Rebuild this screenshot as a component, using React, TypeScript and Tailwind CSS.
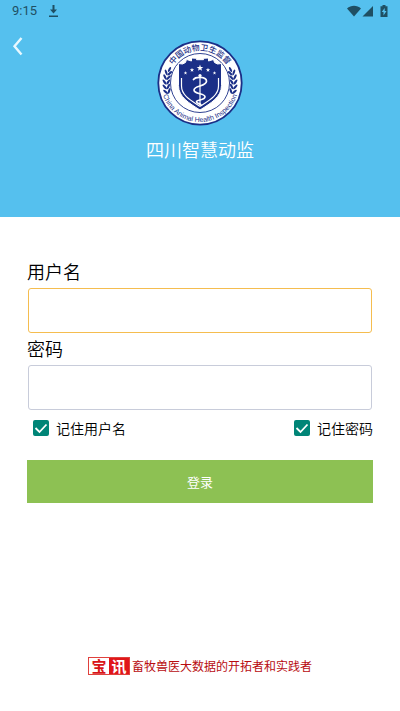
import { useState } from "react";

const navy = "#1b2f87";

function StatusBar() {
  return (
    <div className="flex h-[22px] items-center justify-between px-3 text-[#1f4f63]">
      <div className="flex items-center gap-3">
        <span className="font-[Roboto,sans-serif] text-[13px] leading-4">9:15</span>
        <svg className="h-3 w-[9px]" viewBox="0 0 9 12" fill="currentColor" aria-hidden="true">
          <path d="M3.500 0h2v4.500H8L4.500 8.500 1 4.500h2.500zM0 10.500h9V12H0z" />
        </svg>
      </div>
      <svg className="h-3 w-[41px]" viewBox="0 0 41 12" fill="currentColor" aria-hidden="true">
        <path d="M0 3.500C4-.3 10-.3 14 3.500L7 11.500z" />
        <path d="M26 1v10.500H15.500z" />
        <path fillRule="evenodd" d="M35.500 0h3v1.200H40.500V12h-7V1.200h2zM37.700 3l-3 4h1.800v3.500l3-4.500h-1.800z" />
      </svg>
    </div>
  );
}

function Leaves() {
  return (
    <g fill={navy}>
      {[-16, -8, 0, 8, 16].map((angle) => (
        <g key={angle} transform={`rotate(${angle} 43 43)`}>
          <ellipse cx="7.500" cy="42" rx="1.100" ry="3" transform="rotate(-35 7.500 42)" />
          <ellipse cx="11.200" cy="42" rx="1.100" ry="3" transform="rotate(35 11.200 42)" />
        </g>
      ))}
      <ellipse cx="12.500" cy="29.500" rx="1.100" ry="2.800" transform="rotate(28 12.500 29.500)" />
    </g>
  );
}

function Star({ x, y, size }: { x: number; y: number; size: number }) {
  return (
    <path
      fill="#fff"
      transform={`translate(${x} ${y}) scale(${size})`}
      d="M0-1 .24-.31.95-.31.38.12.59.81 0 .4-.59.81-.38.12-.95-.31-.24-.31z"
    />
  );
}

function Emblem() {
  return (
    <svg className="h-[86px] w-[86px]" viewBox="0 0 86 86" role="img" aria-label="中国动物卫生监督">
      <defs>
        <path id="arc-top" d="M10.500 43a32.500 32.500 0 0 1 65 0" />
        <path id="arc-bottom" d="M4 43a39 39 0 0 0 78 0" />
      </defs>
      <circle cx="43" cy="43" r="41.700" fill="#fff" stroke={navy} strokeWidth="1.800" />
      <circle cx="43" cy="43" r="29.500" fill="none" stroke={navy} strokeWidth=".9" />
      <Leaves />
      <g transform="translate(86 0) scale(-1 1)">
        <Leaves />
      </g>
      <path
        d="M21.500 23.500l4 .5 3-1.500 1-3 5 1.500v-3l5 .3v1.400h7v-1.400l5-.3v3l5-1.500 1 3 3 1.500 4-.5v22C64.500 57 54 63 43 70 32 63 21.500 57 21.500 45.500z"
        fill={navy}
        stroke="#fff"
        strokeWidth="1"
      />
      <path
        d="M24.500 38v8C24.500 55.500 34 60.500 43 66.300 52 60.500 61.500 55.500 61.500 46v-8"
        fill="none"
        stroke="#fff"
        strokeWidth="1.200"
      />
      <Star x={43} y={28} size={3.5} />
      <Star x={35} y={30} size={2.3} />
      <Star x={51} y={30} size={2.3} />
      <Star x={28.5} y={33} size={1.9} />
      <Star x={57.5} y={33} size={1.9} />
      <path d="M43 36v29" stroke="#fff" strokeWidth="1.200" strokeLinecap="round" />
      <circle cx="43" cy="35.500" r="1.600" fill="#fff" />
      <path
        d="M36.500 39.500c2-3 13-3 13 1.700 0 5.300-12.500 4.300-12.500 8.800s11 3 11 6.800-8.500 2.700-8.500 5 4 1.200 4.500 3.200"
        fill="none"
        stroke="#fff"
        strokeWidth="1.700"
        strokeLinecap="round"
      />
      <text
        fill={navy}
        textAnchor="middle"
        className="font-['Noto_Sans_CJK_SC',sans-serif] text-[8px] font-medium"
      >
        <textPath href="#arc-top" startOffset="50%">中国动物卫生监督</textPath>
      </text>
      <text
        fill={navy}
        textAnchor="middle"
        className="font-['Liberation_Sans',Arial,sans-serif] text-[7px]"
      >
        <textPath href="#arc-bottom" startOffset="50%">China Animal Health Inspection</textPath>
      </text>
    </svg>
  );
}

function Field({ id, label, type, active }: { id: string; label: string; type: string; active?: boolean }) {
  return (
    <div>
      <label htmlFor={id} className="mb-px block text-[18px] leading-[31px] font-[350]">
        {label}
      </label>
      <div className="px-px">
        <input
          id={id}
          type={type}
          className={`block h-[45px] w-full rounded-[3px] border bg-white px-3 text-base outline-none ${
            active ? "border-[#f5bd4f]" : "border-[#c8ccda]"
          }`}
        />
      </div>
    </div>
  );
}

function Remember({ label }: { label: string }) {
  const [checked, setChecked] = useState(true);
  return (
    <label className="flex items-center gap-[7px] text-sm leading-5 font-[350]">
      <span className="grid h-4 w-4">
        <input
          type="checkbox"
          checked={checked}
          onChange={(e) => setChecked(e.target.checked)}
          className="col-start-1 row-start-1 h-4 w-4 appearance-none rounded-[2px] border-2 border-[#008577] checked:bg-[#008577]"
        />
        <svg
          className="pointer-events-none col-start-1 row-start-1 h-4 w-4"
          viewBox="0 0 16 16"
          fill="none"
          stroke="#fff"
          strokeWidth="1.800"
          aria-hidden="true"
        >
          {checked && <path d="M2.500 8l4 4 7-7.500" />}
        </svg>
      </span>
      {label}
    </label>
  );
}

export default function App() {
  return (
    <div className="flex min-h-screen flex-col bg-white font-['Noto_Sans_CJK_SC',sans-serif] text-black">
      <header className="bg-[#55c0ee] pb-[55px]">
        <StatusBar />
        <div className="grid grid-cols-[1fr_auto_1fr] items-start pt-[18px]">
          <button type="button" aria-label="返回" className="ml-3 w-3 text-[#e8f8ff]">
            <svg className="h-[19px] w-3 overflow-visible" viewBox="0 0 12 19" aria-hidden="true">
              <path d="M9.500-2L2.500 6.300l7 8.300" fill="none" stroke="currentColor" strokeWidth="2.400" />
            </svg>
          </button>
          <Emblem />
        </div>
        <h1 className="mt-[10px] text-center text-[18px] leading-[26px] font-[350] text-white">四川智慧动监</h1>
      </header>

      <main className="flex grow flex-col px-[27px] pt-[39px]">
        <form onSubmit={(e) => e.preventDefault()}>
          <Field id="username" label="用户名" type="text" active />
          <Field id="password" label="密码" type="password" />
          <div className="flex justify-between pt-2 pl-[6px]">
            <Remember label="记住用户名" />
            <Remember label="记住密码" />
          </div>
          <button
            type="submit"
            className="mt-[22px] block h-[43px] w-full bg-[#8dc153] text-[13px] leading-5 text-white"
          >
            登录
          </button>
        </form>
      </main>

      <footer className="flex items-center justify-center gap-[2px] pb-[35px] text-[#b80c10]">
        <span className="flex h-[18px] w-[42px] shrink-0 border border-[#e0413d] text-[15px] leading-4 font-bold">
          <span className="w-1/2 text-center text-[#d81418]">宝</span>
          <span className="w-1/2 bg-[#e0161a] text-center text-white">讯</span>
        </span>
        <p className="text-xs leading-5">畜牧兽医大数据的开拓者和实践者</p>
      </footer>
    </div>
  );
}
